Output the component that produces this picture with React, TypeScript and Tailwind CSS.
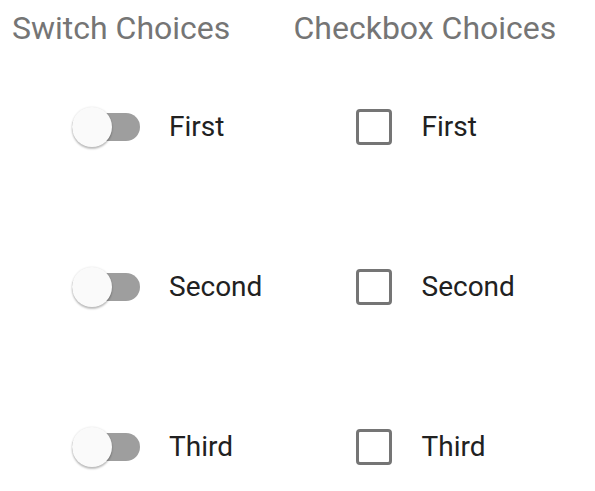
import React, { useState } from 'react';

const items = ['First', 'Second', 'Third'];

const Switch: React.FC<{ on: boolean; onToggle: () => void }> = ({ on, onToggle }) => (
  <button onClick={onToggle} className="relative w-[68px] h-[40px] flex items-center shrink-0">
    <span className={`w-[68px] h-[28px] rounded-full ${on ? 'bg-[#90caf9]' : 'bg-[#9e9e9e]'}`} />
    <span
      className={`absolute top-0 w-[40px] h-[40px] rounded-full shadow-[0_2px_2px_rgba(0,0,0,0.24),0_0_2px_rgba(0,0,0,0.12)] ${
        on ? 'left-[28px] bg-[#2196f3]' : 'left-0 bg-[#fafafa]'
      }`}
    />
  </button>
);

const Checkbox: React.FC<{ on: boolean; onToggle: () => void }> = ({ on, onToggle }) => (
  <button
    onClick={onToggle}
    className={`w-[36px] h-[36px] rounded-[4px] border-[3px] shrink-0 ${
      on ? 'bg-[#2196f3] border-[#2196f3]' : 'border-[#757575]'
    }`}
  />
);

export default function App() {
  const [switches, setSwitches] = useState([false, false, false]);
  const [checks, setChecks] = useState([false, false, false]);

  return (
    <div
      className="w-[595px] h-[491px] bg-white grid grid-cols-2 overflow-hidden"
      style={{ fontFamily: 'Roboto, sans-serif' }}
    >
      {/* Switch column */}
      <div className="flex flex-col">
        <h2 className="h-[47px] pl-3 pt-[8px] text-[32px] leading-[40px] text-[#757575]">Switch Choices</h2>
        {items.map((label, i) => (
          <div key={label} className="h-[160px] flex items-center pl-[72px] gap-[29px]">
            <Switch
              on={switches[i]}
              onToggle={() => setSwitches(s => s.map((v, j) => (j === i ? !v : v)))}
            />
            <span className="text-[28px] text-[#212121]">{label}</span>
          </div>
        ))}
      </div>

      {/* Checkbox column */}
      <div className="flex flex-col">
        <h2 className="h-[47px] pt-[8px] text-[32px] leading-[40px] text-[#757575] -ml-1">Checkbox Choices</h2>
        {items.map((label, i) => (
          <div key={label} className="h-[160px] flex items-center pl-[58px] gap-[30px]">
            <Checkbox
              on={checks[i]}
              onToggle={() => setChecks(c => c.map((v, j) => (j === i ? !v : v)))}
            />
            <span className="text-[28px] text-[#212121]">{label}</span>
          </div>
        ))}
      </div>
    </div>
  );
}
